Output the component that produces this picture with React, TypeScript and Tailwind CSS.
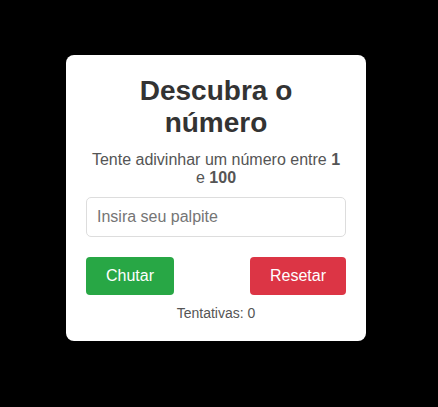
import { useState } from "react";

export default function App() {
  const [guess, setGuess] = useState("");
  const [tries, setTries] = useState(0);

  return (
    <div
      className="min-h-screen w-full bg-black pt-[55px] pl-[66px]"
      style={{ fontFamily: '"Liberation Sans", Arial, sans-serif' }}
    >
      <div className="w-[300px] rounded-lg bg-white p-5 text-center">
        <h1 className="text-[28px] font-bold leading-8 text-[#333]">
          Descubra o número
        </h1>
        <p className="mt-3 text-base leading-[18px] text-[#555]">
          Tente adivinhar um número entre <strong>1</strong> e{" "}
          <strong>100</strong>
        </p>
        <input
          type="number"
          value={guess}
          onChange={(e) => setGuess(e.target.value)}
          placeholder="Insira seu palpite"
          className="mt-[10px] h-10 w-full rounded-[5px] border border-[#ddd] px-[10px] text-base text-[#333] placeholder:text-[#757575] outline-none"
        />
        <div className="mt-5 flex justify-between">
          <button
            onClick={() => setTries(tries + 1)}
            className="h-[38px] rounded-[4px] bg-[#28a745] px-5 text-base text-white"
          >
            Chutar
          </button>
          <button
            onClick={() => {
              setTries(0);
              setGuess("");
            }}
            className="h-[38px] rounded-[4px] bg-[#dc3545] px-5 text-base text-white"
          >
            Resetar
          </button>
        </div>
        <p className="mt-[10px] text-sm leading-4 text-[#555]">
          Tentativas: {tries}
        </p>
      </div>
    </div>
  );
}
